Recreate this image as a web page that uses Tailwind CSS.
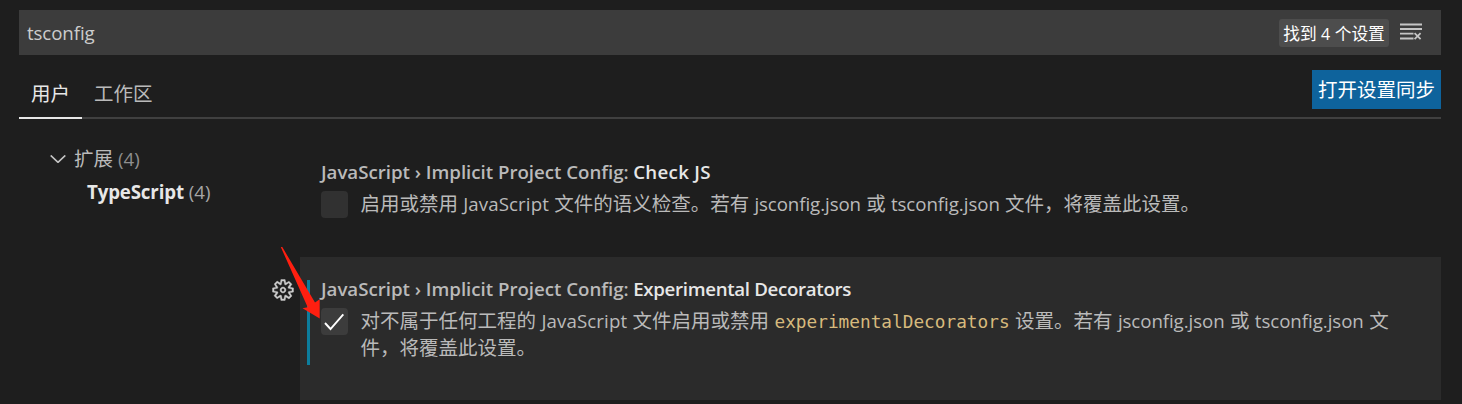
<!DOCTYPE html>
<html lang="zh-CN">
<head>
<meta charset="utf-8">
<title>设置</title>
<script src="https://cdn.jsdelivr.net/npm/@tailwindcss/browser@4"></script>
</head>
<body class="relative h-[404px] w-[1462px] overflow-hidden bg-[#1e1e1e] pl-[19px] pr-[21px] pt-[10px] font-['Open_Sans','Noto_Sans_CJK_SC',sans-serif] text-[18.7px] leading-[27px] text-[#bababa] whitespace-nowrap">

<!-- search -->
<header class="flex h-[45px] items-center bg-[#3c3c3c] pl-2 pr-[18px]">
  <span class="flex-1 tracking-[-0.1px] text-[#cccccc]">tsconfig</span>
  <span class="mr-[10px] flex h-7 w-[110px] items-baseline justify-center gap-[4.5px] rounded-[3px] bg-[#4d4d4d] text-[16.7px] leading-[29px] text-white"><span>找到</span><span class="text-[16px]">4</span><span>个设置</span></span>
  <svg class="mb-[2px] h-6 w-6" viewBox="0 0 24 24" fill="none" stroke="#c5c5c5" stroke-width="1.800">
    <path d="M1 4.5h22M1 9h22M1 13.7h13.500M1 18.500h13.500M15.600 13.200l6 6M21.600 13.200l-6 6"/>
  </svg>
</header>

<!-- scope tabs -->
<nav class="flex h-[64px] items-start justify-between border-b-2 border-[#404040] pt-[15px] text-[19.5px]">
  <div class="flex">
    <div class="h-[49px] w-[63px] border-b-2 border-[#e7e7e7] pl-[12px] pt-[10px] text-[#e7e7e7]">用户</div>
    <div class="pl-[12px] pt-[10px]">工作区</div>
  </div>
  <button class="h-[39px] w-[129px] bg-[#0e639c] text-white">打开设置同步</button>
</nav>

<main class="flex">
  <aside class="w-[281px] pt-[26px]">
    <div class="flex h-[32px] items-baseline gap-[5px] pl-[31px]">
      <svg class="mr-[3px] mt-[10px] h-2 w-4 self-start" viewBox="0 0 16 8" fill="none" stroke="#c5c5c5" stroke-width="1.700"><path d="M.7.5L8 7.300 15.300.5"/></svg>
      <span class="text-[19.5px]">扩展</span><span class="text-[#8f8f8f]">(4)</span>
    </div>
    <div class="flex items-baseline gap-[5px] pl-[68px] pt-[1px]">
      <span class="font-bold tracking-[-0.15px] text-[#e7e7e7]">TypeScript</span><span class="text-[#a6a6a6]">(4)</span>
    </div>
  </aside>

  <div class="w-[1141px]">
    <section class="h-[138px] pl-[21px] pt-[39px]">
      <h3 class="flex h-[31px] items-baseline gap-[4.5px] font-semibold"><span class="tracking-[-0.02px]">JavaScript › Implicit Project Config:</span><span class="tracking-[0.3px] text-[#e7e7e7]">Check JS</span></h3>
      <div class="flex">
        <span class="mt-[2px] h-[27px] w-[27px] rounded-[4px] bg-[#313131]"></span>
        <p class="ml-[12.5px] flex items-baseline gap-[5.2px] pt-[1px]">
          <span class="text-[19.5px]">启用或禁用</span><span class="tracking-[0.1px]">JavaScript</span><span class="text-[19.5px]">文件的语义检查。若有</span><span class="tracking-[-0.08px]">jsconfig.json</span><span class="text-[19.5px]">或</span><span class="tracking-[-0.05px]">tsconfig.json</span><span class="text-[19.5px]">文件，将覆盖此设置。</span>
        </p>
      </div>
    </section>

    <section class="relative h-[143px] bg-[#2b2b2b] pl-[21px] pt-[18px]">
      <span class="absolute left-[7px] top-[23px] h-[85px] w-[3px] bg-[#0c7d9d]"></span>
      <h3 class="flex h-[31px] items-baseline gap-[4.5px] font-semibold"><span class="tracking-[-0.02px]">JavaScript › Implicit Project Config:</span><span class="tracking-[-0.32px] text-[#e7e7e7]">Experimental Decorators</span></h3>
      <div class="flex">
        <span class="mt-[2px] h-[27px] w-[27px] rounded-[4px] bg-[#3c3c3c]">
          <svg class="h-[27px] w-[27px]" viewBox="0 0 27 27" fill="none" stroke="#fff" stroke-width="1.900"><path d="M4 15l5.500 6L22.300 6.300"/></svg>
        </span>
        <div class="ml-[12.5px] pt-[1px]">
          <p class="flex h-[27px] items-baseline gap-[5.4px]">
            <span class="text-[19.5px]">对不属于任何工程的</span><span class="tracking-[0.1px]">JavaScript</span><span class="text-[19.5px]">文件启用或禁用</span><code class="font-['DejaVu_Sans_Mono',monospace] text-[17.75px] text-[#d7ba7d]">experimentalDecorators</code><span class="text-[19.5px]">设置。若有</span><span class="tracking-[-0.08px]">jsconfig.json</span><span class="text-[19.5px]">或</span><span class="tracking-[-0.05px]">tsconfig.json</span><span class="text-[19.5px]">文</span>
          </p>
          <p class="text-[19.5px]">件，将覆盖此设置。</p>
        </div>
      </div>
      <svg class="absolute left-[-29px] top-[21px] h-6 w-6" viewBox="0 0 16 16" fill="#cccccc" stroke="#cccccc" stroke-width=".25" fill-rule="evenodd"><path d="M9.100 4.400L8.600 2H7.400l-.5 2.400-.7.300-2-1.300-.9.800 1.300 2-.2.700-2.400.5v1.200l2.400.5.300.8-1.300 2 .8.800 2-1.300.8.300.4 2.300h1.200l.5-2.400.8-.3 2 1.300.8-.8-1.300-2 .3-.8 2.300-.4V7.400l-2.400-.5-.3-.8 1.300-2-.8-.8-2 1.300-.7-.2zM9.400 1l.5 2.400L12 2.100l2 2-1.400 2.100 2.400.4v2.800l-2.400.5L14 12l-2 2-2.100-1.400-.5 2.400H6.600l-.5-2.400L4 13.900l-2-2 1.400-2.100L1 9.400V6.600l2.400-.5L2.100 4l2-2 2.100 1.400.4-2.400h2.800zm.6 7c0 1.100-.9 2-2 2s-2-.9-2-2 .9-2 2-2 2 .9 2 2zM8 9c.6 0 1-.4 1-1s-.4-1-1-1-1 .4-1 1 .4 1 1 1z"/></svg>
      <!-- annotation arrow -->
      <svg class="absolute left-[-20px] top-[-11px] h-[74px] w-[42px]" viewBox="0 0 42 74" fill="#ff1f10"><path d="M.8 1L2.300 1.100 35 56.500 39.700 53.300V72.500L22.500 62.300 27.700 61.300Z"/></svg>
    </section>
  </div>
</main>
</body>
</html>
